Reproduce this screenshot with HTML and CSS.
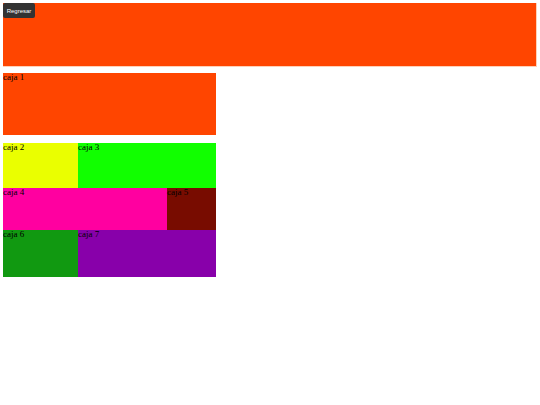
FILE: index.html
```html
<!DOCTYPE html>
<html>
<head>
<meta charset="utf-8">
<link rel="stylesheet" href="styles.css">
</head>
<body>
<header class="cabecera">
  <button class="regresar">Regresar</button>
</header>
<div class="caja caja1">caja 1</div>
<div class="rejilla">
  <div class="fila fila1">
    <div class="caja caja2">caja 2</div>
    <div class="caja caja3">caja 3</div>
  </div>
  <div class="fila fila2">
    <div class="caja caja4">caja 4</div>
    <div class="caja caja5">caja 5</div>
  </div>
  <div class="fila fila3">
    <div class="caja caja6">caja 6</div>
    <div class="caja caja7">caja 7</div>
  </div>
</div>
</body>
</html>
```
FILE: styles.css
```css
html, body { background: #fff; }
body {
  margin: 3px;
  font-family: "Liberation Serif", "Times New Roman", serif;
  font-size: 9px;
  line-height: 1;
  color: #000;
}
.cabecera {
  width: 533px;
  height: 63px;
  background: #ff4500;
  box-shadow: 0 0 0 1px #ffd0b8;
}
.regresar {
  display: block;
  margin: 0;
  border: 0;
  border-radius: 2px;
  background: #333333;
  color: #fff;
  font-family: "Liberation Sans", Arial, sans-serif;
  font-size: 6px;
  width: 32px;
  height: 15px;
  padding: 0;
}
.caja1 {
  margin-top: 7px;
  width: 213px;
  height: 62px;
  background: #ff4500;
}
.rejilla {
  margin-top: 8px;
  width: 213px;
  display: flex;
  flex-direction: column;
}
.fila { display: flex; }
.fila1 { height: 45px; }
.fila2 { height: 42px; }
.fila3 { height: 47px; }
.caja2 { width: 75px; background: #eaff00; }
.caja3 { flex: 1; background: #11ff00; }
.caja4 { width: 164px; background: #ff00a0; }
.caja5 { flex: 1; background: #780c00; }
.caja6 { width: 75px; background: #119911; }
.caja7 { flex: 1; background: #8800aa; }
```
